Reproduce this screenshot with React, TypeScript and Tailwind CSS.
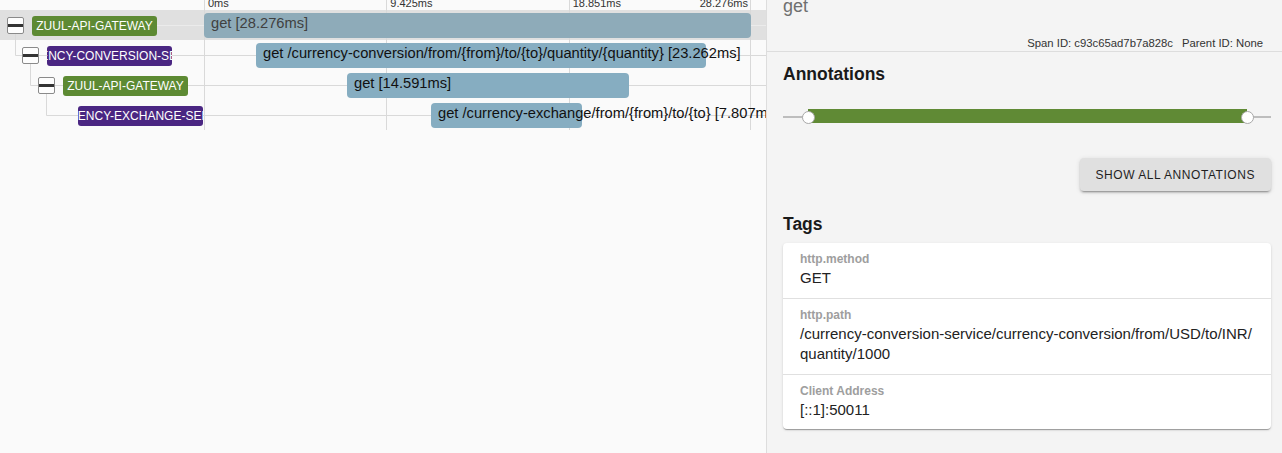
import React from "react";

type Row = {
  service: string;
  color: string;
  pl: string;
  hasChildren: boolean;
  connectorX: number | null;
  left: number;
  width: number;
  text: string;
  selected?: boolean;
};

const rows: Row[] = [
  {
    service: "ZUUL-API-GATEWAY",
    color: "bg-[#5d8a33]",
    pl: "pl-[7px]",
    hasChildren: true,
    connectorX: null,
    left: 0,
    width: 547,
    text: "get [28.276ms]",
    selected: true,
  },
  {
    service: "CURRENCY-CONVERSION-SERVICE",
    color: "bg-[#4a2682]",
    pl: "pl-[22px]",
    hasChildren: true,
    connectorX: 15.5,
    left: 52,
    width: 450,
    text: "get /currency-conversion/from/{from}/to/{to}/quantity/{quantity} [23.262ms]",
  },
  {
    service: "ZUUL-API-GATEWAY",
    color: "bg-[#5d8a33]",
    pl: "pl-[38px]",
    hasChildren: true,
    connectorX: 30.5,
    left: 143,
    width: 282,
    text: "get [14.591ms]",
  },
  {
    service: "CURRENCY-EXCHANGE-SERVICE",
    color: "bg-[#4a2682]",
    pl: "pl-[53px]",
    hasChildren: false,
    connectorX: 46.5,
    left: 227,
    width: 151,
    text: "get /currency-exchange/from/{from}/to/{to} [7.807ms]",
  },
];

const tags = [
  { key: "http.method", value: ["GET"] },
  {
    key: "http.path",
    value: ["/currency-conversion-service/currency-conversion/from/USD/to/INR/", "quantity/1000"],
  },
  { key: "Client Address", value: ["[::1]:50011"] },
];

function ToggleBox() {
  return (
    <div className="w-[17px] h-[17px] shrink-0 rounded-[2px] border border-[#8a8a8a] bg-[#fdfdfd] flex items-center">
      <div className="w-full h-[3px] bg-[#333333]" />
    </div>
  );
}

function SpanRow({ row }: { row: Row }) {
  const d = row.connectorX !== null
    ? `M${row.connectorX} -6 V15.5 H766`
    : "M157 15.5 H766";
  return (
    <div className={`relative flex h-[30px] ${row.selected ? "bg-[#e0e0e0]" : ""}`}>
      <svg className="absolute left-0 top-0 overflow-visible" width="766" height="30">
        <path d={d} fill="none" stroke={row.selected ? "#ebebeb" : "#d9d9d9"} strokeWidth="1" />
      </svg>
      <div className={`relative w-[204px] shrink-0 flex items-center gap-[8px] pt-[1px] ${row.pl}`}>
        {row.hasChildren ? <ToggleBox /> : <div className="w-[17px] shrink-0" />}
        <div
          className={`w-[125px] h-[20px] shrink-0 rounded-[3px] ${row.color} flex items-center justify-center overflow-hidden whitespace-nowrap text-white text-[12px] leading-none`}
        >
          {row.service}
        </div>
      </div>
      <div className="relative w-[547px] shrink-0 grid grid-cols-3">
        <div className="border-l border-[#d9d9d9]" />
        <div className="border-l border-[#d9d9d9]" />
        <div className="border-l border-r border-[#d9d9d9]" />
        <div
          className={`absolute top-[3px] h-[25px] rounded-[4px] ${row.selected ? "bg-[#8eabb9]" : "bg-[#86adc1]"}`}
          style={{ left: row.left, width: row.width }}
        >
          <div
            className={`pl-[7px] whitespace-nowrap text-[14.7px] leading-[21px] ${row.selected ? "text-[#404040]" : "text-[#111111]"}`}
          >
            {row.text}
          </div>
        </div>
      </div>
      <div className="flex-1" />
    </div>
  );
}

export default function App() {
  return (
    <div className="flex w-[1282px] h-[453px] overflow-hidden font-['Liberation_Sans',Arial,sans-serif]">
      {/* Left: trace timeline */}
      <div className="w-[766px] shrink-0 overflow-hidden bg-[#fafafa] flex flex-col">
        <div className="flex h-[10px] shrink-0">
          <div className="w-[204px] shrink-0" />
          <div className="w-[547px] shrink-0 grid grid-cols-3 text-[11px] leading-[11px] text-[#333333] whitespace-nowrap">
            <div className="border-l border-[#d9d9d9] pl-[3px]">
              <div className="-mt-[2px]">0ms</div>
            </div>
            <div className="border-l border-[#d9d9d9] pl-[3px]">
              <div className="-mt-[2px]">9.425ms</div>
            </div>
            <div className="border-l border-r border-[#d9d9d9] pl-[3px] pr-[2px] flex justify-between">
              <div className="-mt-[2px]">18.851ms</div>
              <div className="-mt-[2px]">28.276ms</div>
            </div>
          </div>
        </div>
        {rows.map((r, i) => (
          <SpanRow key={i} row={r} />
        ))}
      </div>

      {/* Right: span detail */}
      <div className="flex-1 border-l border-[#dddddd] bg-[#f4f4f4] flex flex-col">
        <div className="h-[52px] shrink-0 border-b border-[#dddddd] flex flex-col justify-between pl-[16px] pr-[19px] pb-[1px]">
          <div className="-mt-[3px] text-[18px] leading-[18px] text-[#6f6f6f]">get</div>
          <div className="flex justify-end gap-[9px] text-[11.3px] leading-[13px] text-[#333333]">
            <span>Span ID: c93c65ad7b7a828c</span>
            <span>Parent ID: None</span>
          </div>
        </div>

        <div className="flex flex-col pl-[16px] pr-[11px]">
          <div className="mt-[12px] text-[17.5px] leading-[20px] font-bold text-[#1a1a1a]">Annotations</div>

          <div className="relative mt-[25px] h-[15px]">
            <div className="absolute left-0 right-0 top-[7px] h-[2px] bg-[#bdbdbd]" />
            <div className="absolute left-[25px] right-[24px] top-0 h-[14px] bg-[#608a35]" />
            <div className="absolute left-[18.5px] top-[1.5px] w-[13px] h-[13px] rounded-full bg-white border border-[#a8a8a8]" />
            <div className="absolute right-[17.5px] top-[1.5px] w-[13px] h-[13px] rounded-full bg-white border border-[#a8a8a8]" />
          </div>

          <div className="mt-[34px] self-end h-[33px] px-[16px] flex items-center rounded-[4px] bg-[#e0e0e0] text-[12px] tracking-[0.55px] text-[#1f1f1f] shadow-[0_3px_1px_-2px_rgba(0,0,0,0.2),0_2px_2px_0_rgba(0,0,0,0.14),0_1px_5px_0_rgba(0,0,0,0.12)]">
            SHOW ALL ANNOTATIONS
          </div>

          <div className="mt-[23px] text-[17.5px] leading-[20px] font-bold text-[#1a1a1a]">Tags</div>

          <div className="mt-[9px] bg-white rounded-[4px] shadow-[0_2px_1px_-1px_rgba(0,0,0,0.2),0_1px_1px_0_rgba(0,0,0,0.14),0_1px_3px_0_rgba(0,0,0,0.12)]">
            {tags.map((t, i) => (
              <div
                key={t.key}
                className={`pl-[17px] pr-[16px] pt-[8px] pb-[9px] ${i < tags.length - 1 ? "border-b border-[#e0e0e0]" : ""}`}
              >
                <div className="text-[12px] leading-[16px] font-bold text-[#9e9e9e]">{t.key}</div>
                <div className="mt-[1px] text-[15px] leading-[20.5px] text-[#222222]">
                  {t.value.map((v) => (
                    <div key={v} className="whitespace-nowrap">{v}</div>
                  ))}
                </div>
              </div>
            ))}
          </div>
        </div>
      </div>
    </div>
  );
}
